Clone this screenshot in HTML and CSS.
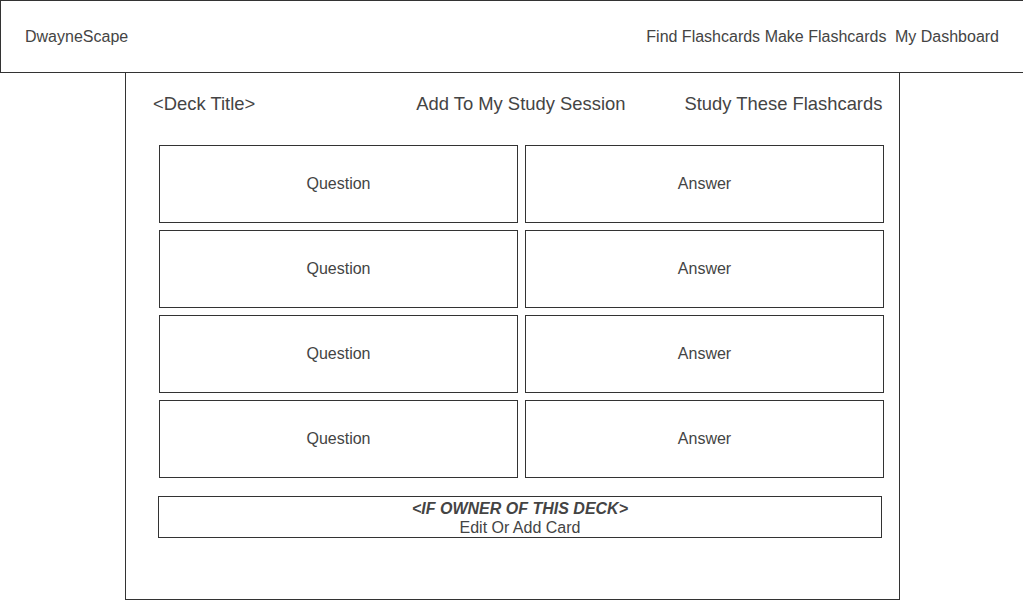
FILE: index.html
```html
<!DOCTYPE html>
<html lang="en">
<head>
  <meta charset="UTF-8">
  <meta name="viewport" content="width=device-width, initial-scale=1.0">
  <title>DwayneScape - Deck</title>
  <link rel="stylesheet" href="styles.css">
</head>
<body>
  <header class="top-bar">
    <a class="brand" href="#">DwayneScape</a>
    <nav class="nav-links">
      <a href="#">Find Flashcards</a>
      <a href="#">Make Flashcards</a>
      <a class="dashboard-link" href="#">My Dashboard</a>
    </nav>
  </header>

  <main class="deck-panel">
    <!-- Deck toolbar -->
    <div class="deck-toolbar">
      <span class="deck-title">&lt;Deck Title&gt;</span>
      <a class="add-session" href="#">Add To My Study Session</a>
      <a class="study-link" href="#">Study These Flashcards</a>
    </div>

    <!-- Cards -->
    <div class="card-grid">
      <div class="card">Question</div>
      <div class="card">Answer</div>
      <div class="card">Question</div>
      <div class="card">Answer</div>
      <div class="card">Question</div>
      <div class="card">Answer</div>
      <div class="card">Question</div>
      <div class="card">Answer</div>
    </div>

    <!-- Owner only -->
    <div class="owner-box">
      <div class="owner-note">&lt;IF OWNER OF THIS DECK&gt;</div>
      <a class="edit-link" href="#">Edit Or Add Card</a>
    </div>
  </main>
</body>
</html>
```

FILE: styles.css
```css
/* General Styles */
body {
  font-family: "Liberation Sans", Arial, sans-serif;
  margin: 0;
  padding: 0;
  background-color: #fff;
  color: #444;
  font-size: 16px;
}

a {
  color: #444;
  text-decoration: none;
}

/* Header */
.top-bar {
  box-sizing: border-box;
  width: 1024px;
  height: 73px;
  border: 1px solid #333;
  display: flex;
  align-items: center;
  justify-content: space-between;
  padding: 0 24px 0 24px;
}

.nav-links {
  display: flex;
  gap: 4.5px;
}

.nav-links .dashboard-link {
  margin-left: 4px;
}

/* Deck panel */
.deck-panel {
  box-sizing: border-box;
  width: 775px;
  height: 527px;
  margin-left: 125px;
  border: 1px solid #333;
  border-top: none;
}

.deck-toolbar {
  display: flex;
  align-items: center;
  font-size: 18.4px;
  line-height: 21px;
  padding: 20px 0 0 27px;
}

.add-session {
  margin-left: 161px;
}

.study-link {
  margin-left: 59px;
}

.card-grid {
  display: grid;
  grid-template-columns: 359px 359px;
  grid-auto-rows: 78px;
  gap: 7px;
  margin: 31px 0 0 33px;
}

.card {
  box-sizing: border-box;
  border: 1px solid #333;
  display: flex;
  align-items: center;
  justify-content: center;
}

.owner-box {
  box-sizing: border-box;
  width: 724px;
  height: 42px;
  margin: 18px 0 0 32px;
  border: 1px solid #333;
  padding-top: 2px;
  text-align: center;
  line-height: 19px;
}

.owner-note {
  font-weight: bold;
  font-style: italic;
}

.edit-link {
  display: block;
}
```
